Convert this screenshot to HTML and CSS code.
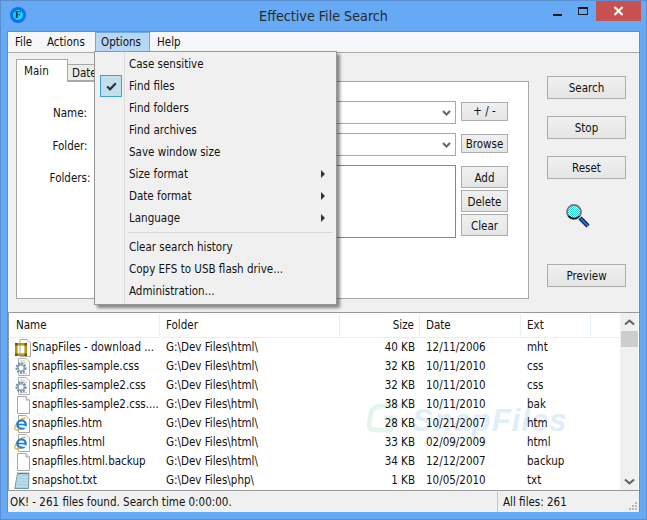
FILE: index.html
```html
<!DOCTYPE html>
<html lang="en">
<head>
<meta charset="utf-8">
<title>Effective File Search</title>
<link rel="stylesheet" href="styles.css">
</head>
<body>
<svg class="defs" width="0" height="0" aria-hidden="true">
  <defs>
    <symbol id="page" viewBox="0 0 18 18">
      <path d="M3.500 .5H12L15.500 4V17.500H3.500Z" fill="#fff" stroke="#a8a8a8"/>
      <path d="M12 .5V4H15.500" fill="#e8e8e8" stroke="#a8a8a8"/>
    </symbol>
    <symbol id="gear" viewBox="0 0 18 18">
      <path d="M4.500 .5H12L15.500 4V17.500H4.500Z" fill="#fff" stroke="#b0b0b0"/>
      <path d="M6 3H11M6 5H13M6 15.500H13" stroke="#c4c8cc"/>
      <circle cx="7" cy="10" r="4.200" fill="none" stroke="#6c86a0" stroke-width="2.600" stroke-dasharray="1.800 1"/>
      <circle cx="7" cy="10" r="3.200" fill="none" stroke="#8ea4ba" stroke-width="1.400"/>
      <circle cx="7" cy="10" r="1.400" fill="#fff"/>
    </symbol>
    <symbol id="ie" viewBox="0 0 18 18">
      <path d="M4.500 .5H12L15.500 4V17.500H4.500Z" fill="#fff" stroke="#a8a8a8"/>
      <path d="M.8 12.500C2 8 7 3.500 11.500 3" fill="none" stroke="#f0b020" stroke-width="1.400"/>
      <circle cx="7.500" cy="9.500" r="4.200" fill="none" stroke="#1f7fd8" stroke-width="2.300"/>
      <path d="M3.500 9.500H11.500" stroke="#1f7fd8" stroke-width="1.600"/>
      <path d="M8.500 12H12" stroke="#fff" stroke-width="1.600"/>
      <path d="M.8 12.500C.5 15.500 3 15.500 6 13.800" fill="none" stroke="#f0b020" stroke-width="1.400"/>
    </symbol>
    <symbol id="txt" viewBox="0 0 18 18">
      <path d="M3.500 1.500H15L14.500 16.500H.8Z" fill="#a8d0e4" stroke="#6a96a8"/>
      <path d="M3 5H14M2.600 8H14M2.200 11H14M1.800 14H14" stroke="#c8e4f0"/>
      <path d="M3.500 1H15" stroke="#444" stroke-dasharray="1 1"/>
    </symbol>
    <symbol id="mht" viewBox="0 0 18 18">
      <path d="M6 .5H13L16.500 4V17.500H6Z" fill="#fff" stroke="#a8a8a8"/>
      <rect x="2.300" y="5.300" width="9.400" height="10.400" fill="none" stroke="#b8960c" stroke-width="2.600"/>
      <rect x="1" y="4" width="2.500" height="2.500" fill="#6a5400"/>
      <rect x="10.500" y="4" width="2.500" height="2.500" fill="#6a5400"/>
      <rect x="1" y="14.500" width="2.500" height="2.500" fill="#6a5400"/>
      <rect x="10.500" y="14.500" width="2.500" height="2.500" fill="#6a5400"/>
    </symbol>
  </defs>
</svg>

<div class="window">
  <header class="titlebar">
    <span class="app-icon">F</span>
    <h1 class="title">Effective File Search</h1>
    <div class="controls">
      <span class="ctl ctl-min"><i class="min-glyph"></i></span>
      <span class="ctl ctl-max"><i class="max-glyph"></i></span>
      <span class="ctl ctl-close">
        <svg width="11" height="10" viewBox="0 0 11 10"><path d="M1.500 1L9.500 9M9.500 1L1.500 9" stroke="#fff" stroke-width="2.200"/></svg>
      </span>
    </div>
  </header>

  <div class="client">
    <nav class="menubar">
      <span class="menu-item">File</span>
      <span class="menu-item">Actions</span>
      <span class="menu-item menu-open">Options</span>
      <span class="menu-item">Help</span>
    </nav>

    <section class="top">
      <div class="tabs-area">
        <div class="tabstrip">
          <span class="tab tab-active">Main</span>
          <span class="tab tab-idle">Date</span>
        </div>
        <div class="tabpanel">
          <div class="form-row form-row-name">
            <label class="field-label">Name:</label>
            <div class="combo"><svg class="chev" width="9" height="6" viewBox="0 0 9 6"><path d="M1 1L4.500 4.500L8 1" fill="none" stroke="#666" stroke-width="2"/></svg></div>
            <button class="btn btn-side btn-short">+ / -</button>
          </div>
          <div class="form-row form-row-folder">
            <label class="field-label">Folder:</label>
            <div class="combo"><svg class="chev" width="9" height="6" viewBox="0 0 9 6"><path d="M1 1L4.500 4.500L8 1" fill="none" stroke="#666" stroke-width="2"/></svg></div>
            <button class="btn btn-side btn-short btn-browse">Browse</button>
          </div>
          <div class="form-row form-row-folders">
            <label class="field-label">Folders:</label>
            <div class="listbox"></div>
            <div class="side-stack">
              <button class="btn btn-side">Add</button>
              <button class="btn btn-side">Delete</button>
              <button class="btn btn-side">Clear</button>
            </div>
          </div>
        </div>
      </div>

      <aside class="actions">
        <button class="btn btn-main">Search</button>
        <button class="btn btn-main">Stop</button>
        <button class="btn btn-main">Reset</button>
        <svg class="magnifier" width="26" height="26" viewBox="0 0 26 26">
          <defs>
            <pattern id="dither" width="2" height="2" patternUnits="userSpaceOnUse">
              <rect width="2" height="2" fill="#fff"/>
              <rect width="1" height="1" fill="#20d8d8"/>
              <rect x="1" y="1" width="1" height="1" fill="#20d8d8"/>
            </pattern>
          </defs>
          <path d="M15 15L23 23" stroke="#101040" stroke-width="4.500"/>
          <path d="M15.500 15.500L23 23" stroke="#0a78e8" stroke-width="2.200"/>
          <circle cx="9" cy="9" r="7" fill="url(#dither)" stroke="#777" stroke-width="1.800"/>
          <path d="M3.500 13C6 16 11 16.500 14.500 13" fill="none" stroke="#111" stroke-width="1.600"/>
        </svg>
        <button class="btn btn-main btn-preview">Preview</button>
      </aside>
    </section>

    <section class="list">
      <div class="list-main">
        <svg class="wm-logo" width="38" height="30" viewBox="0 0 38 30"><path d="M36 3H14C8 3 5 6 4 10L2 20C1 25 4 27 9 27H24L26 15H17" fill="none" stroke="#e6f5ec" stroke-width="5"/></svg>
        <span class="watermark">SnapFiles</span>
        <div class="list-row list-head">
          <span class="col col-name">Name</span>
          <span class="col col-folder">Folder</span>
          <span class="col col-size">Size</span>
          <span class="col col-date">Date</span>
          <span class="col col-ext">Ext</span>
          <span class="col col-rest"></span>
        </div>
        <div class="list-row"><span class="col col-name"><svg class="ficon"><use href="#mht"/></svg>SnapFiles - download ...</span><span class="col col-folder">G:\Dev Files\html\</span><span class="col col-size">40 KB</span><span class="col col-date">12/11/2006</span><span class="col col-ext">mht</span></div>
        <div class="list-row"><span class="col col-name"><svg class="ficon"><use href="#gear"/></svg>snapfiles-sample.css</span><span class="col col-folder">G:\Dev Files\html\</span><span class="col col-size">32 KB</span><span class="col col-date">10/11/2010</span><span class="col col-ext">css</span></div>
        <div class="list-row"><span class="col col-name"><svg class="ficon"><use href="#gear"/></svg>snapfiles-sample2.css</span><span class="col col-folder">G:\Dev Files\html\</span><span class="col col-size">32 KB</span><span class="col col-date">10/11/2010</span><span class="col col-ext">css</span></div>
        <div class="list-row"><span class="col col-name"><svg class="ficon"><use href="#page"/></svg>snapfiles-sample2.css....</span><span class="col col-folder">G:\Dev Files\html\</span><span class="col col-size">38 KB</span><span class="col col-date">10/11/2010</span><span class="col col-ext">bak</span></div>
        <div class="list-row"><span class="col col-name"><svg class="ficon"><use href="#ie"/></svg>snapfiles.htm</span><span class="col col-folder">G:\Dev Files\html\</span><span class="col col-size">28 KB</span><span class="col col-date">10/21/2007</span><span class="col col-ext">htm</span></div>
        <div class="list-row"><span class="col col-name"><svg class="ficon"><use href="#ie"/></svg>snapfiles.html</span><span class="col col-folder">G:\Dev Files\html\</span><span class="col col-size">33 KB</span><span class="col col-date">02/09/2009</span><span class="col col-ext">html</span></div>
        <div class="list-row"><span class="col col-name"><svg class="ficon"><use href="#page"/></svg>snapfiles.html.backup</span><span class="col col-folder">G:\Dev Files\html\</span><span class="col col-size">34 KB</span><span class="col col-date">12/12/2007</span><span class="col col-ext">backup</span></div>
        <div class="list-row"><span class="col col-name"><svg class="ficon"><use href="#txt"/></svg>snapshot.txt</span><span class="col col-folder">G:\Dev Files\php\</span><span class="col col-size">1 KB</span><span class="col col-date">10/05/2010</span><span class="col col-ext">txt</span></div>
      </div>
      <div class="scrollbar">
        <svg class="arrow" width="11" height="7" viewBox="0 0 11 7"><path d="M1 5.500L5.500 1.500L10 5.500" fill="none" stroke="#606060" stroke-width="2"/></svg>
        <div class="thumb"></div>
        <div class="track"></div>
        <svg class="arrow" width="11" height="7" viewBox="0 0 11 7"><path d="M1 1.500L5.500 5.500L10 1.500" fill="none" stroke="#606060" stroke-width="2"/></svg>
      </div>
    </section>

    <footer class="status">
      <span class="status-main">OK! - 261 files found. Search time 0:00:00.</span>
      <span class="status-side">All files: 261</span>
      <svg class="grip" width="10" height="10" viewBox="0 0 10 10"><path d="M7 1h2v2H7zM4 4h2v2H4zM7 4h2v2H7zM1 7h2v2H1zM4 7h2v2H4zM7 7h2v2H7z" fill="#b8b8b8"/></svg>
    </footer>
  </div>

  <div class="dropdown">
    <div class="dd-item">Case sensitive</div>
    <div class="dd-item dd-checked"><span class="check"><svg width="11" height="9" viewBox="0 0 11 9"><path d="M1.200 4.500L4 7.300L9.800 1.200" fill="none" stroke="#333" stroke-width="2.200"/></svg></span>Find files</div>
    <div class="dd-item">Find folders</div>
    <div class="dd-item">Find archives</div>
    <div class="dd-item">Save window size</div>
    <div class="dd-item dd-sub">Size format</div>
    <div class="dd-item dd-sub">Date format</div>
    <div class="dd-item dd-sub">Language</div>
    <div class="dd-sep"></div>
    <div class="dd-item">Clear search history</div>
    <div class="dd-item">Copy EFS to USB flash drive...</div>
    <div class="dd-item">Administration...</div>
  </div>
</div>
</body>
</html>
```
FILE: styles.css
```css
* { box-sizing: border-box; }
html, body { margin: 0; padding: 0; }
body {
  width: 647px;
  height: 520px;
  overflow: hidden;
  font: 11.5px/16px "DejaVu Sans", sans-serif;
  font-stretch: condensed;
  color: #111;
}
.defs { position: absolute; }
button { font: inherit; font-stretch: inherit; color: inherit; padding: 0; }

.window {
  position: relative;
  width: 647px;
  height: 520px;
  display: flex;
  flex-direction: column;
  background: #66a9f5;
  border: 1px solid #5b8fd0;
}

.titlebar {
  height: 30px;
  flex: none;
  position: relative;
  display: flex;
  align-items: center;
  justify-content: center;
}
.app-icon {
  position: absolute;
  left: 9px;
  top: 6px;
  width: 16px;
  height: 16px;
  border-radius: 50%;
  background: #18d8f0;
  border: 3px solid #0a70f0;
  font: bold 10px/10px "Liberation Serif", serif;
  color: #083060;
  text-align: center;
}
.title {
  margin: 0;
  font: 400 14.2px/22px "DejaVu Sans", sans-serif;
  font-stretch: condensed;
  color: #2a2a2a;
}
.controls {
  position: absolute;
  right: 5px;
  top: 0;
  display: flex;
}
.ctl { display: flex; align-items: center; justify-content: center; height: 20px; }
.ctl-min { width: 26px; }
.ctl-max { width: 26px; }
.ctl-close { width: 45px; background: #c75050; }
.min-glyph { display: block; width: 9px; height: 2px; background: #1a1a1a; margin-top: 7px; }
.max-glyph { display: block; width: 10px; height: 8px; border: 1px solid #1a1a1a; border-top-width: 2px; }

.client {
  flex: 1;
  min-height: 0;
  margin: 0 6px 7px;
  display: flex;
  flex-direction: column;
  background: #f0f0f0;
  border: 1px solid #5b8fd0;
  border-bottom: 0;
}

.menubar {
  height: 21px;
  flex: none;
  display: flex;
  background: #f5f6f7;
  border-bottom: 1px solid #a8a8a8;
}
.menu-item {
  padding: 1px 7px 0;
  line-height: 18px;
  height: 20px;
}
.menu-item:first-child { width: 32px; }
.menu-item:nth-child(2) { width: 55px; }
.menu-open {
  width: 55px;
  background: #b8d6f6;
  border: 1px solid #6ca8e8;
  border-bottom: 0;
  padding: 0 5px;
}

.top {
  height: 259px;
  flex: none;
  display: flex;
  padding: 7px 0 0 8px;
}
.tabs-area { width: 513px; height: 239px; display: flex; flex-direction: column; }
.tabstrip { height: 21px; flex: none; display: flex; align-items: flex-end; position: relative; z-index: 1; }
.tab { display: block; border: 1px solid #a8a8a8; }
.tab-active {
  width: 52px;
  height: 23px;
  margin-bottom: -1px;
  padding: 3px 0 0 7px;
  background: #fff;
  border-bottom: 0;
}
.tab-idle {
  width: 60px;
  height: 17px;
  padding: 0 0 0 4px;
  border-left: 0;
  background: #ececec;
}
.tabpanel {
  flex: 1;
  background: #fff;
  border: 1px solid #a8a8a8;
  display: flex;
  flex-direction: column;
  padding: 19px 0 0 32px;
}
.form-row { display: flex; }
.form-row-name { height: 23px; align-items: flex-start; margin-bottom: 9px; }
.form-row-folder { height: 23px; align-items: flex-start; margin-bottom: 9px; }
.field-label { width: 42px; text-align: center; margin-right: 5px; padding-top: 4px; flex: none; }
.form-row-folder .field-label,
.form-row-folders .field-label { padding-top: 5px; }
.combo {
  width: 360px;
  height: 23px;
  flex: none;
  background: #fff;
  border: 1px solid #a8a8a8;
  display: flex;
  align-items: center;
  justify-content: flex-end;
  padding-right: 4px;
}
.listbox { width: 360px; height: 73px; flex: none; background: #fff; border: 1px solid #828790; }
.side-stack { display: flex; flex-direction: column; gap: 2px; margin-left: 5px; padding-top: 1px; }
.side-stack .btn { padding-top: 1px; }
.form-row > .btn-side { margin-left: 5px; margin-top: 1px; }
.btn-browse { padding-top: 1px; }

.btn {
  display: block;
  background: linear-gradient(#f0f0f0, #e5e5e5);
  border: 1px solid #acacac;
  border-radius: 0;
  text-align: center;
}
.btn-side { width: 47px; height: 22px; }
.btn-short { height: 19px; line-height: 15px; }
.actions {
  width: 79px;
  margin-left: 18px;
  padding-top: 16px;
  display: flex;
  flex-direction: column;
  align-items: stretch;
}
.btn-main { height: 23px; margin-bottom: 17px; }
.magnifier { margin: 7px 0 0 18px; flex: none; }
.btn-preview { margin-top: 35px; margin-bottom: 0; }

.list {
  height: 179px;
  flex: none;
  display: flex;
  background: #fff;
  border-top: 1px solid #9a9a9a;
  border-bottom: 1px solid #9a9a9a;
  border-left: 1px solid #9a9a9a;
  overflow: hidden;
}
.list-main { flex: 1; min-width: 0; position: relative; padding-top: 1px; }
.list-row { height: 19px; display: flex; line-height: 19px; white-space: nowrap; position: relative; }
.list-head {
  height: 24px;
  line-height: 23px;
  border-bottom: 1px solid #e4effa;
}
.list-head .col { height: 23px; border-right: 1px solid #e4effa; }
.col { display: block; padding-left: 6px; flex: none; }
.col-name { width: 151px; display: flex; align-items: center; padding-left: 5px; }
.list-head .col-name { padding-left: 7px; }
.col-folder { width: 180px; }
.col-size { width: 80px; text-align: right; padding: 0 5px 0 0; }
.col-date { width: 101px; padding-left: 6px; }
.col-ext { width: 70px; }
.col-rest { width: 30px; border-right: 0 !important; }
.ficon { width: 18px; height: 18px; flex: none; }

.watermark {
  position: absolute;
  left: 403px;
  top: 92px;
  font: italic bold 31px/32px "Liberation Sans", sans-serif;
  letter-spacing: 1px;
  color: #e0eefa;
}
.wm-logo { position: absolute; left: 358px; top: 90px; }

.scrollbar {
  width: 18px;
  flex: none;
  display: flex;
  flex-direction: column;
  align-items: center;
  background: #f0f0f0;
  margin-right: 1px;
}
.arrow { flex: none; margin: 6px 0 5px; }
.thumb { width: 17px; height: 16px; background: #cdcdcd; flex: none; }
.track { flex: 1; }

.status {
  flex: 1;
  display: flex;
  line-height: 20px;
  padding: 1px 0 0 2px;
  position: relative;
}
.status-main { width: 488px; border-right: 1px solid #c8c8c8; }
.status-side { padding-left: 5px; }
.grip { position: absolute; right: 1px; bottom: 1px; }

.dropdown {
  position: absolute;
  z-index: 2;
  left: 93px;
  top: 50px;
  width: 243px;
  height: 254px;
  padding: 1px 2px 0;
  background: #f0f0f0;
  border: 1px solid #979797;
  box-shadow: 3px 3px 3px rgba(0,0,0,.45);
  background-image: linear-gradient(#dcdcdc, #dcdcdc);
  background-size: 1px 100%;
  background-position: 29px 0;
  background-repeat: no-repeat;
}
.dd-item {
  position: relative;
  height: 22px;
  line-height: 23px;
  padding-left: 32px;
}
.check {
  position: absolute;
  left: 3px;
  top: 0;
  width: 22px;
  height: 22px;
  background: #c2dfee;
  border: 1px solid #3ea0dc;
  display: flex;
  align-items: center;
  justify-content: center;
}
.dd-sub::after {
  content: "";
  position: absolute;
  right: 9px;
  top: 7px;
  border: 4px solid transparent;
  border-left: 4px solid #333;
  border-right: 0;
}
.dd-sep { height: 1px; background: #d8d8d8; margin: 3px 2px 3px 31px; }
```
